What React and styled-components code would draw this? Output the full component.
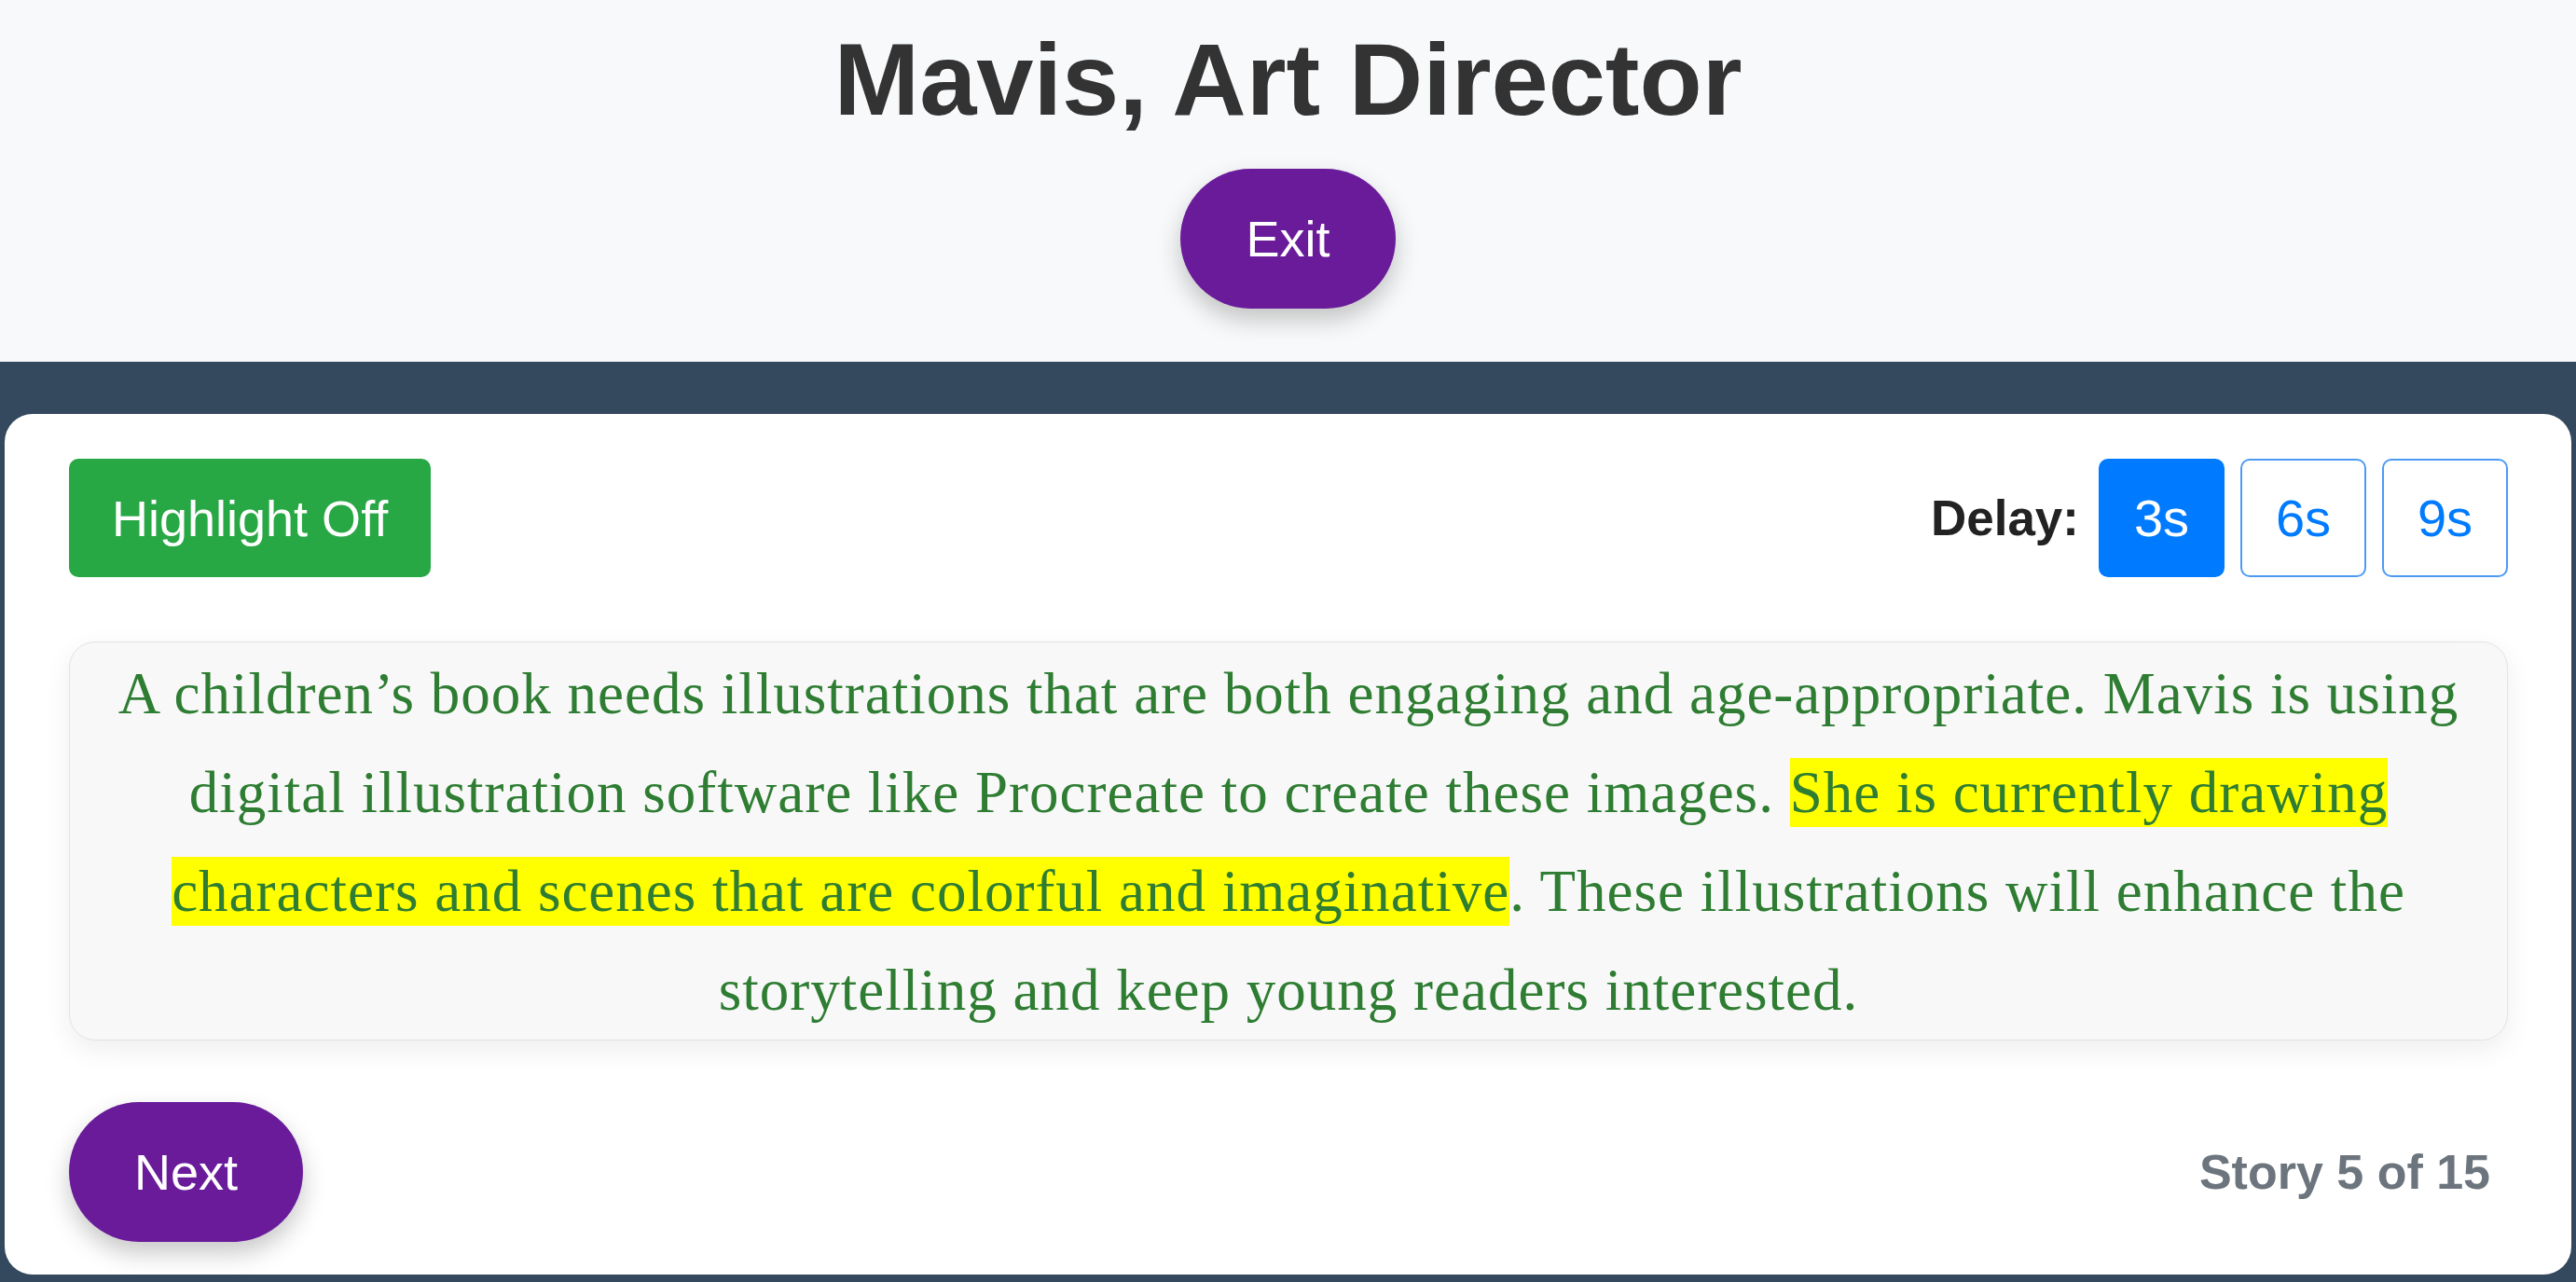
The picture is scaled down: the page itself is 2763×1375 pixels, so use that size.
import React, { useState } from "react";
import styled, { createGlobalStyle } from "styled-components";

const GlobalStyle = createGlobalStyle`
  html, body {
    margin: 0;
    padding: 0;
    background: #34495e;
    font-family: "Liberation Sans", Arial, Helvetica, sans-serif;
  }
  * { box-sizing: border-box; }
`;

const Page = styled.div`
  min-height: 1375px;
  display: flex;
  flex-direction: column;
  background: #34495e;
`;

const Header = styled.header`
  height: 388px;
  background: #f8f9fa;
  display: flex;
  flex-direction: column;
  align-items: center;
  padding-top: 22px;
`;

const Title = styled.h1`
  margin: 0;
  font-size: 110px;
  line-height: 126px;
  font-weight: 700;
  color: #333333;
`;

const PillButton = styled.button`
  height: 150px;
  padding: 0 70px;
  margin-top: ${(p) => p.$offset || 0}px;
  border: none;
  border-radius: 999px;
  background: #6a1b9a;
  color: #ffffff;
  font-family: inherit;
  font-size: 54px;
  box-shadow: 0 12px 26px rgba(0, 0, 0, 0.22);
  cursor: pointer;
`;

const Main = styled.main`
  flex: 1;
  padding: 56px 5px 8px;
`;

const Card = styled.section`
  background: #ffffff;
  border-radius: 30px;
  padding: 48px 68px 35px 69px;
  display: flex;
  flex-direction: column;
`;

const Toolbar = styled.div`
  display: flex;
  align-items: center;
  justify-content: space-between;
`;

const ToggleButton = styled.button`
  height: 127px;
  padding: 0 46px;
  border: none;
  border-radius: 10px;
  background: #28a745;
  color: #ffffff;
  font-family: inherit;
  font-size: 54px;
  cursor: pointer;
`;

const DelayGroup = styled.div`
  display: flex;
  align-items: center;
  gap: 17px;
`;

const DelayLabel = styled.span`
  font-size: 53px;
  font-weight: 700;
  color: #222222;
  margin-right: 4px;
`;

const DelayButton = styled.button`
  width: 135px;
  height: 127px;
  border: 2px solid;
  border-radius: 10px;
  background: ${(p) => (p.$active ? "#007bff" : "#ffffff")};
  border-color: ${(p) => (p.$active ? "#007bff" : "#4d9af5")};
  color: ${(p) => (p.$active ? "#ffffff" : "#007bff")};
  font-family: inherit;
  font-size: 56px;
  padding: 0;
  cursor: pointer;
`;

const StoryBox = styled.div`
  margin-top: 69px;
  height: 428px;
  padding: 2px 30px;
  background: #f8f8f8;
  border: 1px solid #e3e3e3;
  border-radius: 28px;
  box-shadow: 0 10px 30px rgba(0, 0, 0, 0.07);
  text-align: center;
  font-family: "Liberation Serif", "Times New Roman", serif;
  font-size: 63px;
  letter-spacing: 1px;
  line-height: 106px;
  color: #2e7d32;
`;

const Mark = styled.span`
  background: #ffff00;
  padding: 2px 0;
`;

const Footer = styled.div`
  margin-top: 66px;
  display: flex;
  align-items: center;
  justify-content: space-between;
`;

const Counter = styled.span`
  font-size: 52px;
  font-weight: 700;
  color: #6c757d;
  margin-right: 19px;
`;

export default function App() {
  const [delay, setDelay] = useState(3);
  return (
    <Page>
      <GlobalStyle />
      <Header>
        <Title>Mavis, Art Director</Title>
        <PillButton $offset={33}>Exit</PillButton>
      </Header>
      <Main>
        <Card>
          <Toolbar>
            <ToggleButton>Highlight Off</ToggleButton>
            <DelayGroup>
              <DelayLabel>Delay:</DelayLabel>
              {[3, 6, 9].map((d) => (
                <DelayButton key={d} $active={delay === d} onClick={() => setDelay(d)}>
                  {d}s
                </DelayButton>
              ))}
            </DelayGroup>
          </Toolbar>
          <StoryBox>
            A children’s book needs illustrations that are both engaging and age-appropriate. Mavis is
            using digital illustration software like Procreate to create these images.{" "}
            <Mark>She is currently drawing </Mark>
            <Mark>characters and scenes that are colorful and imaginative</Mark>. These illustrations
            will enhance the storytelling and keep young readers interested.
          </StoryBox>
          <Footer>
            <PillButton>Next</PillButton>
            <Counter>Story 5 of 15</Counter>
          </Footer>
        </Card>
      </Main>
    </Page>
  );
}
